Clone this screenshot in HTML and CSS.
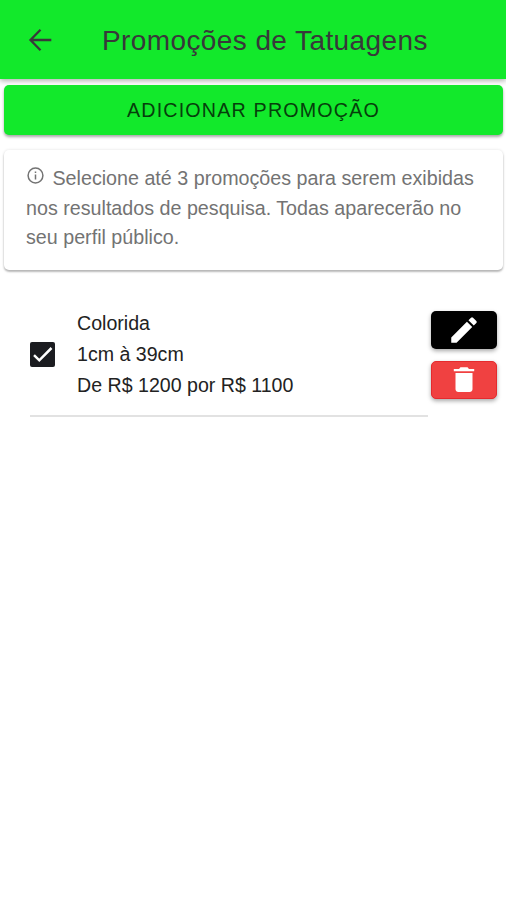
FILE: index.html
```
<!DOCTYPE html>
<html lang="pt-BR">
<head>
  <meta charset="UTF-8">
  <meta name="viewport" content="width=device-width, initial-scale=1.0">
  <title>Promoções de Tatuagens</title>
  <link rel="stylesheet" href="styles.css">
</head>
<body>

  <!-- Toolbar -->
  <header class="toolbar">
    <button class="back-button" aria-label="Voltar">
      <svg width="24" height="24" viewBox="0 0 24 24" fill="none" stroke="#38383a" stroke-width="2.3">
        <path d="M23.3 12H2.7M12.5 1.8L2.5 12l10 10.2"/>
      </svg>
    </button>
    <h1>Promoções de Tatuagens</h1>
  </header>

  <main>
    <button class="add-button">Adicionar promoção</button>

    <!-- Info Card -->
    <div class="card">
      <svg class="info-icon" width="18" height="18" viewBox="0 0 18 18" fill="none" stroke="#737373" stroke-width="1.5">
        <circle cx="9.5" cy="8.5" r="7.4"/>
        <path d="M9.5 7.5v5M9.5 4.5v1.6"/>
      </svg>
      <span>Selecione até 3 promoções para serem exibidas nos resultados de pesquisa. Todas aparecerão no seu perfil público.</span>
    </div>

    <!-- Promotion Item -->
    <div class="promo">
      <div class="promo-item">
        <span class="checkbox">
          <svg width="25" height="25" viewBox="0 0 25 25" fill="none" stroke="#fff" stroke-width="2.5">
            <path d="M4 13.2l5.3 5.1L21.5 6"/>
          </svg>
        </span>
        <div class="promo-text">
          <p>Colorida</p>
          <p>1cm à 39cm</p>
          <p>De R$ 1200 por R$ 1100</p>
        </div>
      </div>
      <div class="promo-actions">
        <button class="action edit" aria-label="Editar">
          <svg width="34" height="34" viewBox="0 0 24 24" fill="#fff">
            <path d="M3 17.25V21h3.75L17.81 9.94l-3.75-3.75L3 17.25zM20.71 7.04a1 1 0 0 0 0-1.41l-2.34-2.34a1 1 0 0 0-1.41 0l-1.83 1.83 3.75 3.75 1.83-1.83z"/>
          </svg>
        </button>
        <button class="action delete" aria-label="Excluir">
          <svg width="34" height="34" viewBox="0 0 24 24" fill="#fff">
            <path d="M6 18.5c0 1.1.9 2 2 2h8c1.1 0 2-.9 2-2V7H6v11.500zM19.200 4.200h-3.700l-1-1.200h-5l-1 1.200H4.800v1.600h14.400V4.200z"/>
          </svg>
        </button>
      </div>
    </div>
  </main>

</body>
</html>
```
FILE: styles.css
```
/* Basic Styling */
* {
  box-sizing: border-box;
  font-family: "Liberation Sans", Arial, sans-serif;
}
body {
  margin: 0;
  background-color: #fff;
  color: #222;
}
button {
  display: flex;
  align-items: center;
  justify-content: center;
  padding: 0;
  border: none;
}

/* Toolbar */
.toolbar {
  display: flex;
  align-items: center;
  height: 79px;
  padding: 1px 28px 0;
  background-color: #12e92b;
  box-shadow: 0 2px 5px rgba(0, 0, 0, 0.3);
}
.back-button {
  width: 24px;
  margin-right: 50px;
  background: none;
}
h1 {
  margin: 0;
  padding-top: 2px;
  font-size: 28px;
  font-weight: normal;
  letter-spacing: 0.4px;
  color: #38383a;
  white-space: nowrap;
}

main {
  padding: 6px 3px 0 4px;
}

/* Add Button */
.add-button {
  width: 100%;
  height: 50px;
  border-radius: 5px;
  background-color: #12e92b;
  box-shadow: 0 2px 3px rgba(0, 0, 0, 0.35);
  color: #063f0b;
  font-size: 19.7px;
  letter-spacing: 1.18px;
  text-transform: uppercase;
}

/* Info Card */
.card {
  height: 120px;
  margin-top: 15px;
  padding: 14px 22px;
  border-radius: 5px;
  box-shadow: 0 2px 2px rgba(0, 0, 0, 0.25), 0 0 3px rgba(0, 0, 0, 0.12);
  color: #737373;
  font-size: 19.7px;
  line-height: 29.5px;
}
.info-icon {
  margin-right: 3px;
}

/* Promotion Item */
.promo {
  display: flex;
  margin-top: 37px;
  padding-left: 26px;
}
.promo-item {
  display: flex;
  width: 398px;
  height: 110px;
  border-bottom: 2px solid #e2e2e2;
}
.checkbox {
  width: 25px;
  height: 25px;
  margin: 35px 22px 0 0;
  border-radius: 2px;
  background-color: #1b1c20;
}
.promo-text {
  padding-top: 1px;
}
.promo-text p {
  margin: 0;
  color: #222;
  font-size: 19.6px;
  line-height: 31px;
}
.promo-actions {
  padding: 4px 0 0 3px;
}
.action {
  width: 66px;
  height: 38px;
  margin-bottom: 12px;
  border-radius: 5px;
  box-shadow: 0 2px 4px rgba(0, 0, 0, 0.35);
}
.edit {
  background-color: #000;
}
.delete {
  border: 1px solid #e52a2e;
  background-color: #f04141;
}
```
